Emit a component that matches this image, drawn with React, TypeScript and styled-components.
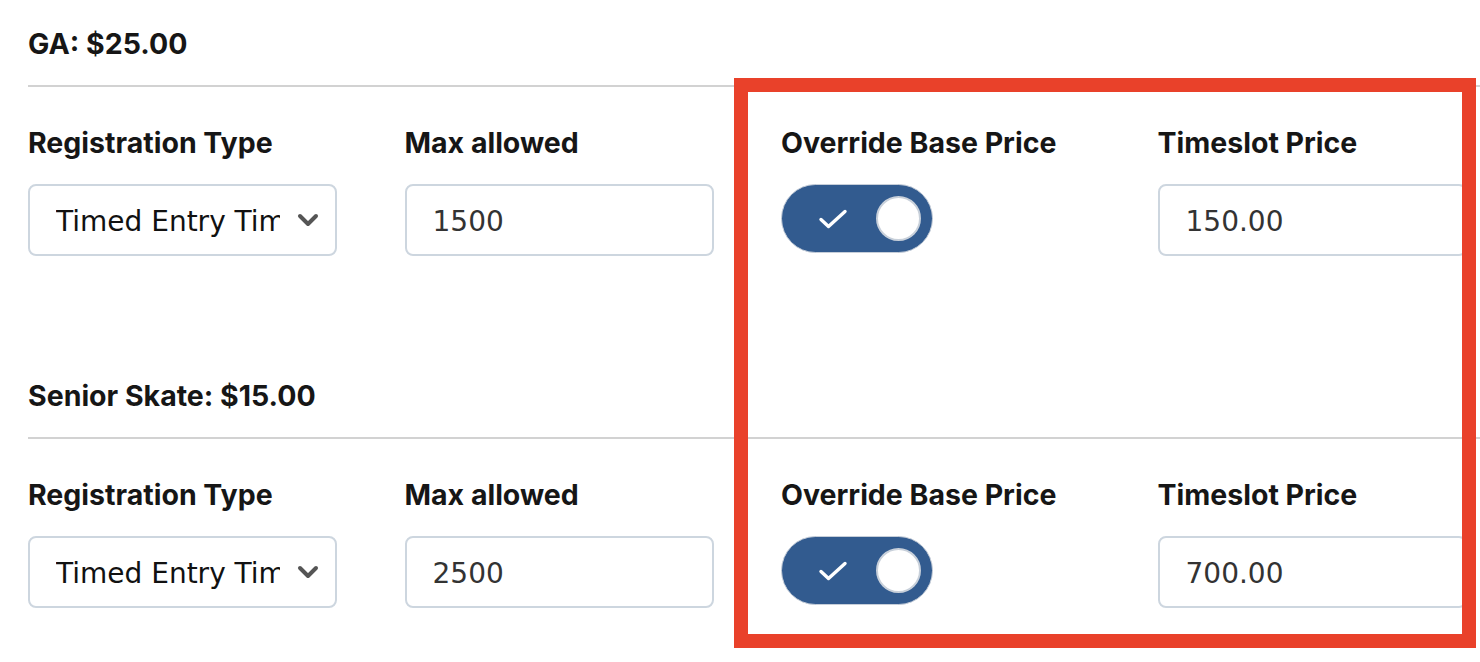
import styled, { createGlobalStyle } from "styled-components";

const GlobalStyle = createGlobalStyle`
  html, body {
    margin: 0;
    padding: 0;
    background: #ffffff;
  }
  body {
    font-family: Inter, "Liberation Sans", Arial, sans-serif;
    color: #161616;
    overflow: hidden;
  }
`;

interface TicketRow {
  name: string;
  basePrice: string;
  regType: string;
  maxAllowed: string;
  override: boolean;
  timeslotPrice: string;
}

const rows: TicketRow[] = [
  {
    name: "GA",
    basePrice: "$25.00",
    regType: "Timed Entry Timeslot",
    maxAllowed: "1500",
    override: true,
    timeslotPrice: "150.00",
  },
  {
    name: "Senior Skate",
    basePrice: "$15.00",
    regType: "Timed Entry Timeslot",
    maxAllowed: "2500",
    override: true,
    timeslotPrice: "700.00",
  },
];

function Toggle({ on }: { on: boolean }) {
  return (
    <ToggleTrack $on={on} role="switch" aria-checked={on}>
      <svg width="30" height="22" viewBox="0 0 30 22" fill="none">
        <path
          d="M3 11.5 L10.5 18.5 L27 3.5"
          stroke="#ffffff"
          strokeWidth="3.4"
          strokeLinecap="round"
          strokeLinejoin="round"
        />
      </svg>
      <Knob />
    </ToggleTrack>
  );
}

function Section({ row }: { row: TicketRow }) {
  return (
    <SectionBox>
      <Heading>
        {row.name}: {row.basePrice}
      </Heading>
      <Divider />
      <FieldGrid>
        <Field>
          <Label>Registration Type</Label>
          <SelectWrap>
            <Select defaultValue={row.regType}>
              <option>{row.regType}</option>
            </Select>
            <Chevron width="22" height="14" viewBox="0 0 22 14" fill="none">
              <path
                d="M3 3 L11 11 L19 3"
                stroke="#555555"
                strokeWidth="4"
                strokeLinecap="round"
                strokeLinejoin="round"
              />
            </Chevron>
          </SelectWrap>
        </Field>
        <Field>
          <Label>Max allowed</Label>
          <TextInput defaultValue={row.maxAllowed} />
        </Field>
        <Field>
          <Label>Override Base Price</Label>
          <Toggle on={row.override} />
        </Field>
        <Field>
          <Label>Timeslot Price</Label>
          <TextInput defaultValue={row.timeslotPrice} />
        </Field>
      </FieldGrid>
    </SectionBox>
  );
}

export default function App() {
  return (
    <Page>
      <GlobalStyle />
      {rows.map((r) => (
        <Section key={r.name} row={r} />
      ))}
      <Highlight />
    </Page>
  );
}

const Page = styled.div`
  position: relative;
  width: 1480px;
  height: 662px;
  overflow: hidden;
  box-sizing: border-box;
  padding: 26px 0 0 28px;
  display: flex;
  flex-direction: column;
  gap: 122px;
`;

const SectionBox = styled.section`
  display: flex;
  flex-direction: column;
`;

const Heading = styled.h2`
  margin: 0;
  font-size: 28.5px;
  line-height: 36px;
  font-weight: 700;
`;

const Divider = styled.hr`
  margin: 23px 0 38px;
  border: none;
  height: 2px;
  background: #d2d2d2;
`;

const FieldGrid = styled.div`
  display: grid;
  grid-template-columns: repeat(4, 309px);
  column-gap: 67.5px;
`;

const Field = styled.div`
  display: flex;
  flex-direction: column;
  gap: 23px;
`;

const Label = styled.label`
  font-size: 28.5px;
  line-height: 36px;
  font-weight: 700;
  white-space: nowrap;
`;

const inputBase = `
  box-sizing: border-box;
  height: 72px;
  width: 309px;
  border: 2px solid #cdd6df;
  border-radius: 8px;
  background: #ffffff;
  font-family: "DejaVu Sans", Verdana, sans-serif;
  font-size: 28px;
  outline: none;
`;

const TextInput = styled.input`
  ${inputBase}
  padding: 3px 20px 0 26px;
  color: #333333;
`;

const SelectWrap = styled.div`
  position: relative;
  width: 309px;
`;

const Select = styled.select`
  ${inputBase}
  appearance: none;
  padding: 3px 55px 0 26px;
  color: #111111;
`;

const Chevron = styled.svg`
  position: absolute;
  left: 269px;
  top: 29px;
  pointer-events: none;
`;

const ToggleTrack = styled.div<{ $on: boolean }>`
  box-sizing: border-box;
  width: 152px;
  height: 69px;
  border-radius: 35px;
  border: 1.5px solid #c6ced9;
  background: ${(p) => (p.$on ? "#325b8f" : "#e5e8ec")};
  display: flex;
  align-items: center;
  justify-content: space-between;
  padding: 0 11px 0 36px;
`;

const Knob = styled.span`
  box-sizing: border-box;
  width: 45px;
  height: 45px;
  border-radius: 50%;
  background: #ffffff;
  border: 2px solid #c8d0da;
`;

const Highlight = styled.div`
  position: absolute;
  left: 734px;
  top: 78px;
  width: 742px;
  height: 570px;
  box-sizing: border-box;
  border: 14.5px solid #e9412a;
  pointer-events: none;
`;
